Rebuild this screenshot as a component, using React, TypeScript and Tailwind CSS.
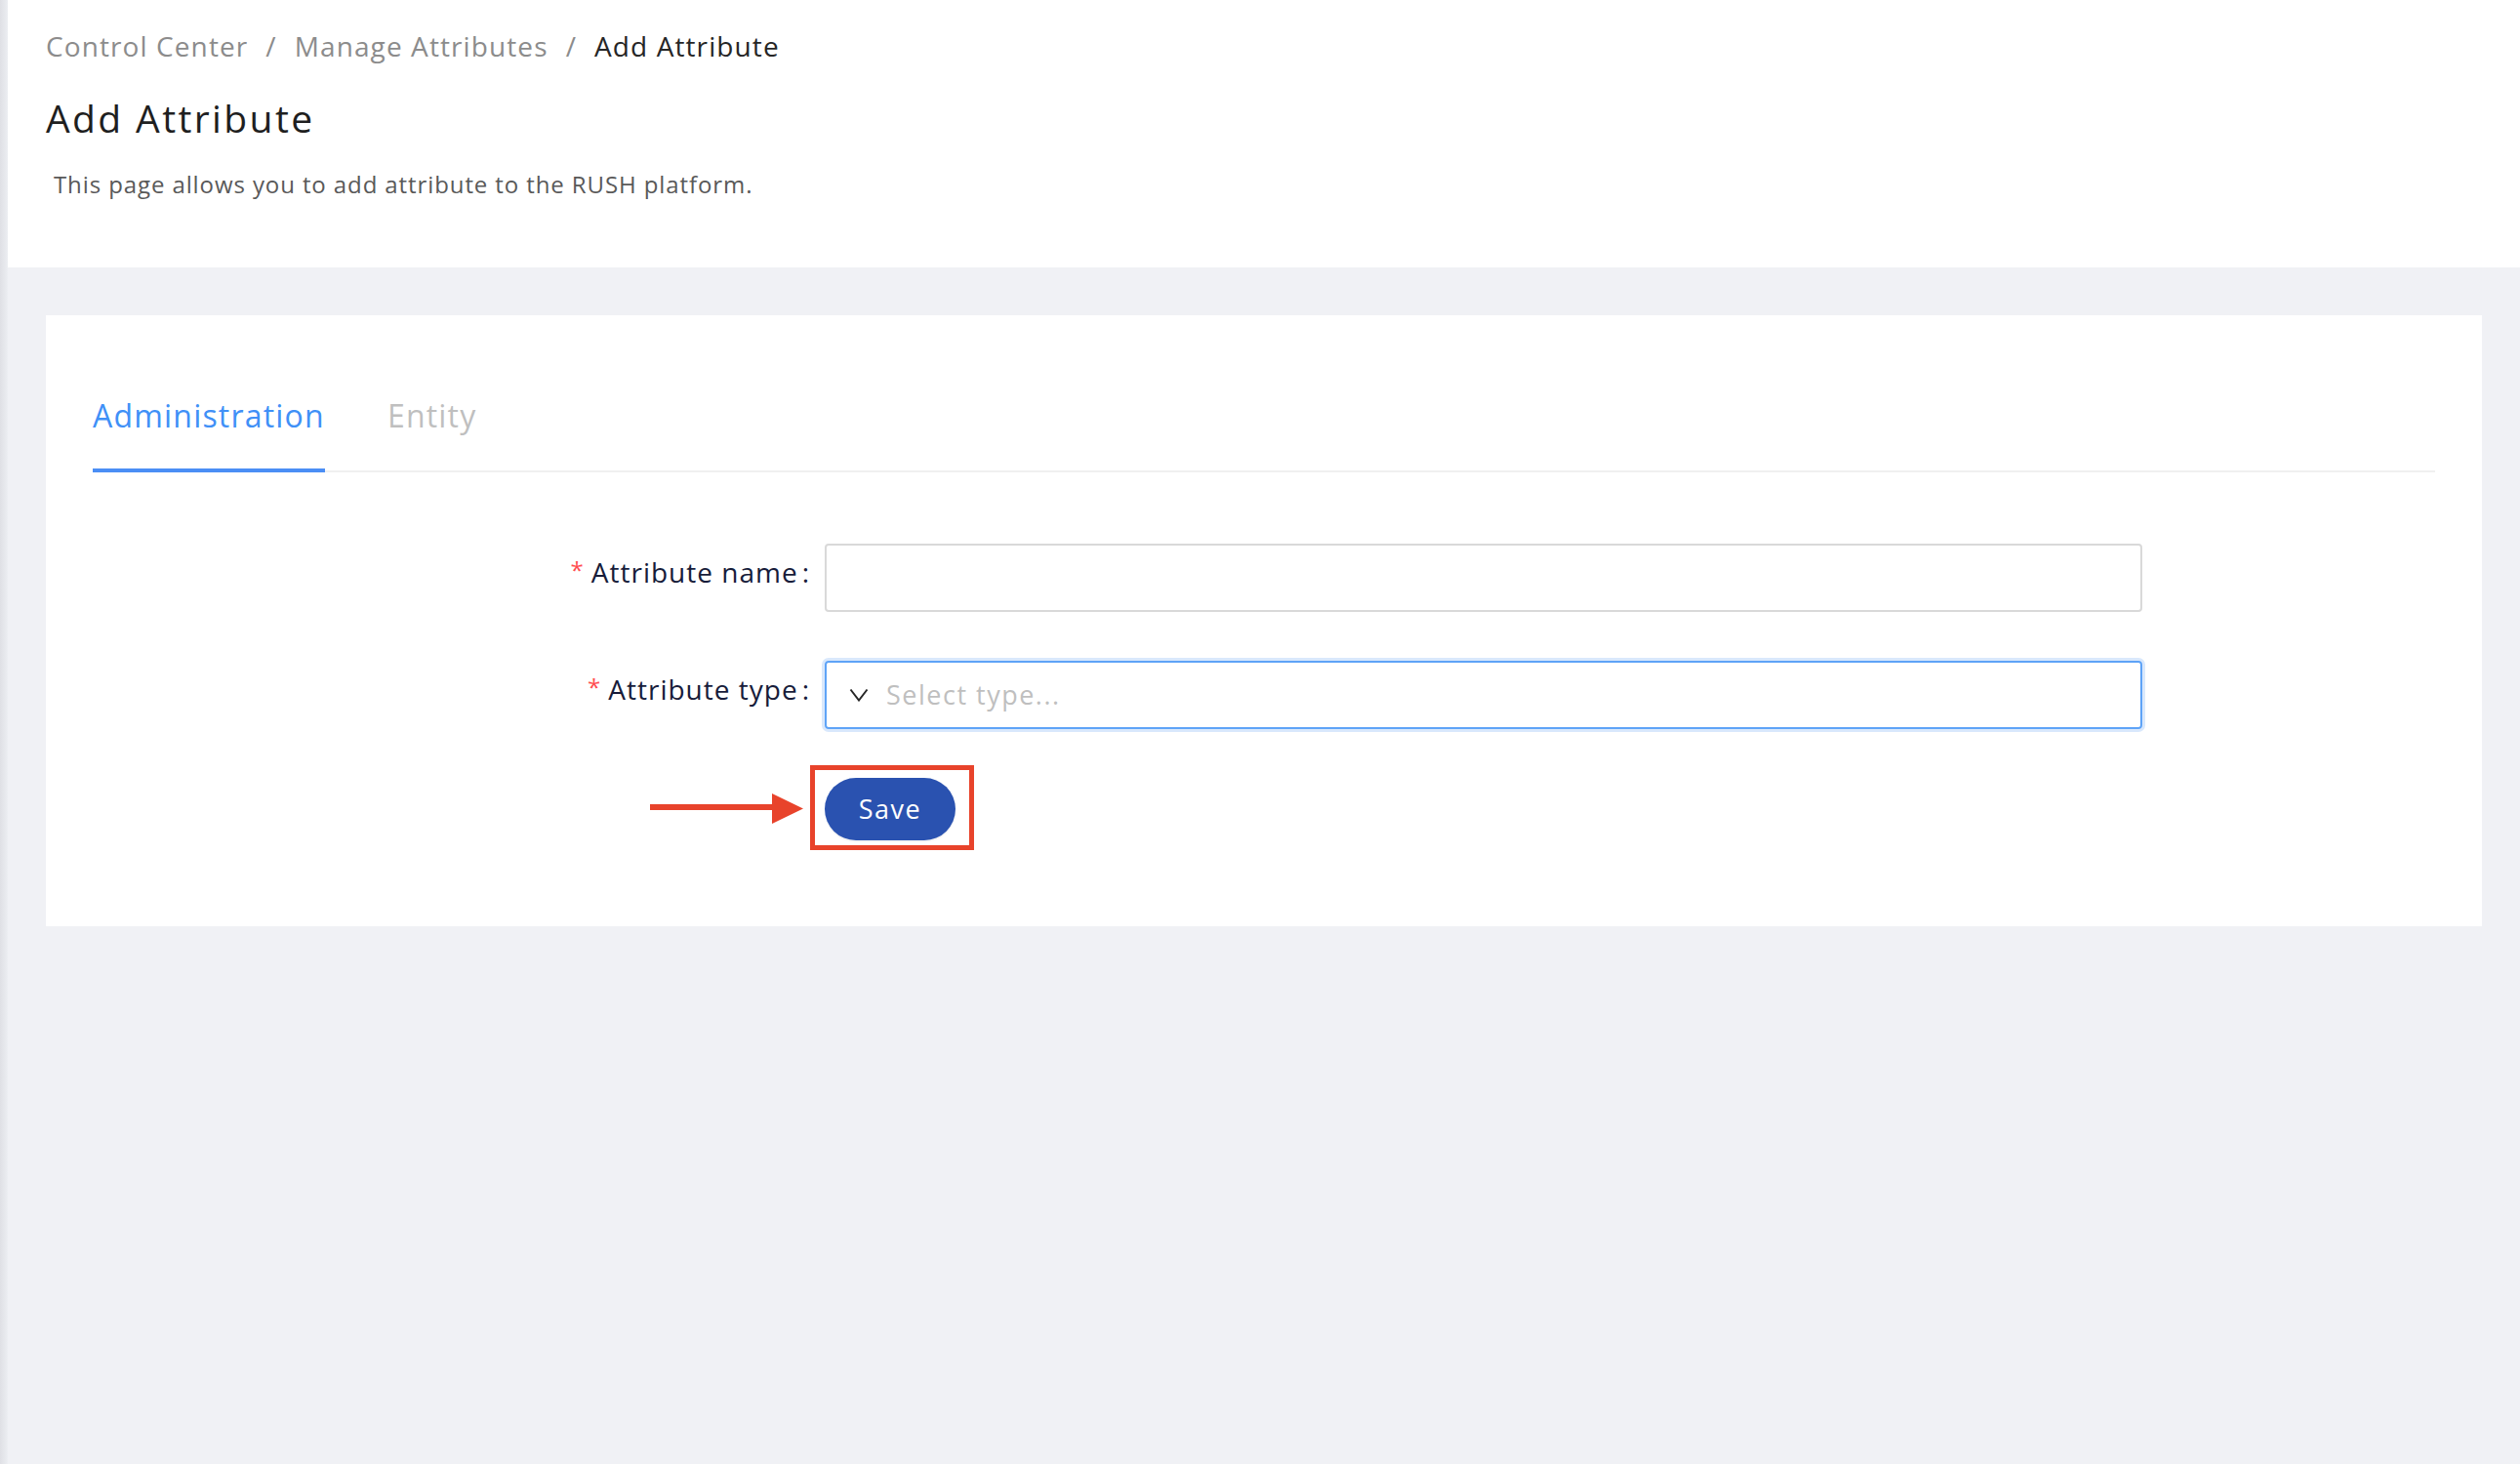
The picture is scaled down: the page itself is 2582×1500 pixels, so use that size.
import { useState } from "react";

const tabs = ["Administration", "Entity"];

function FormRow({ label, children }: { label: string; children: React.ReactNode }) {
  return (
    <div className="flex items-center">
      <div className="w-[750px] shrink-0 flex justify-end items-center pb-[12px]">
        <span className="text-[24px] leading-none text-[#ff4d4f] mr-[8px] self-start mt-[6px]">*</span>
        <span className="text-[28px] leading-[40px] tracking-[1px] text-[#171c3a]">{label}</span>
        <span className="text-[28px] leading-[40px] text-[#171c3a] ml-[4px] mr-[16px]">:</span>
      </div>
      {children}
    </div>
  );
}

export default function App() {
  const [active, setActive] = useState(0);

  return (
    <div className="flex min-h-screen w-full bg-[#f0f1f5] font-['Open_Sans',sans-serif]">
      <div className="w-[8px] shrink-0 bg-gradient-to-r from-[#dfe0e5] to-[#eceef2]" />

      <div className="flex-1 flex flex-col">
        {/* page header */}
        <header className="bg-white h-[274px] pl-[39px] pt-[27px]">
          <nav className="flex items-center text-[28px] leading-[40px] tracking-[1.1px]">
            <span className="text-[#8c8c8c]">Control Center</span>
            <span className="text-[#8c8c8c] mx-[18px]">/</span>
            <span className="text-[#8c8c8c]">Manage Attributes</span>
            <span className="text-[#8c8c8c] mx-[18px]">/</span>
            <span className="text-[#262626]">Add Attribute</span>
          </nav>
          <h1 className="mt-[30px] text-[39px] leading-[48px] font-medium tracking-[2.4px] text-[#1f1f1f]">
            Add Attribute
          </h1>
          <p className="mt-[26px] ml-2 text-[24px] leading-[36px] tracking-[0.9px] text-[#595959]">
            This page allows you to add attribute to the RUSH platform.
          </p>
        </header>

        {/* card */}
        <section className="mx-[39px] mt-[49px] bg-white pt-[55px] pl-[48px] pr-[48px] pb-[88px]">
          <div className="flex gap-[64px] border-b-2 border-[#f0f0f0]">
            {tabs.map((t, i) => (
              <button
                key={t}
                onClick={() => setActive(i)}
                className={
                  "-mb-[2px] pt-[24px] pb-[30px] border-b-4 text-[32px] leading-[48px] tracking-[1.2px] " +
                  (i === active ? "border-[#4b8ef5] text-[#4090f7]" : "border-transparent text-[#bfbfbf]")
                }
              >
                {t}
              </button>
            ))}
          </div>

          <div className="mt-[73px] flex flex-col gap-[50px]">
            <FormRow label="Attribute name">
              <input className="w-[1350px] h-[70px] border-2 border-[#d9d9d9] rounded-[4px] px-[22px] text-[26px] outline-none" />
            </FormRow>

            <FormRow label="Attribute type">
              <div className="w-[1350px] h-[70px] border-2 border-[#5ea3f7] rounded-[4px] shadow-[0_0_0_3px_#d9e8fc] flex items-center pl-[23px]">
                <svg width="20" height="14" viewBox="0 0 20 14" className="shrink-0">
                  <polyline points="1.5,1.5 10,12.5 18.5,1.5" fill="none" stroke="#262626" strokeWidth="2" />
                </svg>
                <span className="ml-[18px] text-[27px] tracking-[1.5px] text-[#bfbfbf]">Select type...</span>
              </div>
            </FormRow>

            <div className="flex">
              <div className="w-[750px] shrink-0" />
              <div className="relative">
                <button className="w-[134px] h-[64px] rounded-full bg-[#2a52b0] text-white text-[27px] tracking-[1.5px] shadow-[0_2px_0_rgba(0,0,0,0.04)]">
                  Save
                </button>
                {/* annotation overlay */}
                <div className="absolute left-[-15px] top-[-13px] w-[168px] h-[87px] border-[5px] border-[#e8432b] pointer-events-none" />
                <svg
                  width="157"
                  height="31"
                  viewBox="0 0 157 31"
                  className="absolute left-[-179px] top-[16px] pointer-events-none"
                >
                  <rect x="0" y="11" width="128" height="6" fill="#e8432b" />
                  <polygon points="125,0 157,15.5 125,31" fill="#e8432b" />
                </svg>
              </div>
            </div>
          </div>
        </section>
      </div>
    </div>
  );
}
